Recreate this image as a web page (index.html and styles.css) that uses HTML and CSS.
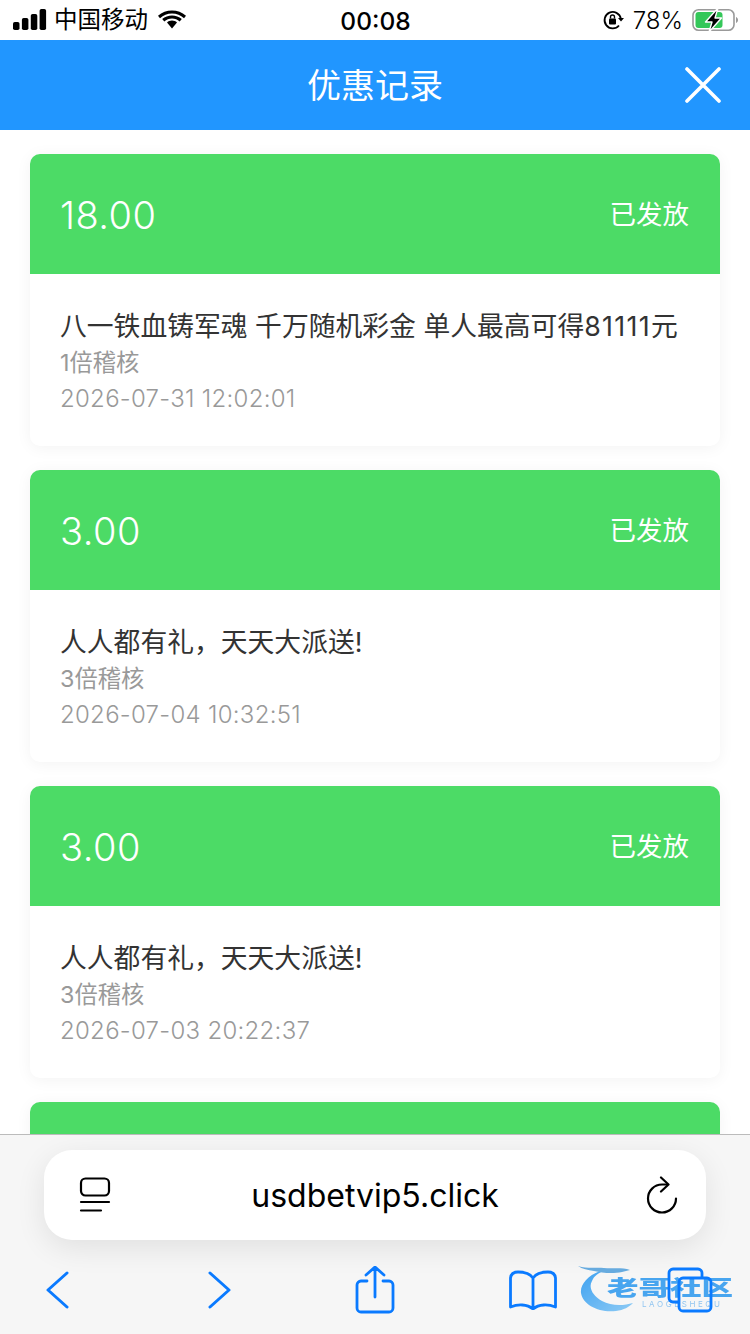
FILE: index.html
```html
<!DOCTYPE html>
<html lang="zh-CN">
<head>
<meta charset="utf-8">
<title>优惠记录</title>
<link rel="stylesheet" href="styles.css">
</head>
<body>
<div class="page">
  <div class="status">
    <div class="status-left">
      <svg class="signal" width="34" height="22" viewBox="0 0 34 22"><rect x="0" y="13" width="6.500" height="8" rx="1.800"/><rect x="8.900" y="9" width="6.500" height="12" rx="1.800"/><rect x="17.800" y="5" width="6.500" height="16" rx="1.800"/><rect x="26.600" y="0" width="6.500" height="21" rx="1.800"/></svg>
      <span class="carrier">中国移动</span>
      <svg width="30" height="22" viewBox="0 0 30 22"><path d="M15 4.500c-4.700 0-8.600 1.700-12 4.700l-2-2.400C5 3.300 9.700 1.500 15 1.500s10 1.800 14 5.300l-2 2.400c-3.400-3-7.300-4.700-12-4.700z"/><path d="M15 9.500c-3 0-5.500 1-7.700 3l-2.100-2.400C8 7.700 11.300 6.500 15 6.500s7 1.200 9.800 3.600l-2.100 2.400c-2.200-2-4.700-3-7.700-3z"/><path d="M15 11.500c2 0 3.600.7 5 1.900L15 19.500l-5-6.100c1.400-1.200 3-1.900 5-1.900z"/></svg>
    </div>
    <div class="clock">00:08</div>
    <div class="status-right">
      <svg class="orient" width="22" height="22" viewBox="0 0 22 22" fill="none"><path d="M18.800 9.500A8.200 8.200 0 1 0 17 16.500" stroke="#000" stroke-width="1.800"/><path d="M16 9h6l-3 3.500z" fill="#000"/><rect x="7" y="9.500" width="7" height="6" rx="1" fill="#000"/><path d="M8.500 9.500V8a2 2 0 0 1 4 0v1.500" stroke="#000" stroke-width="1.400"/></svg>
      <span class="pct">78%</span>
      <svg class="battery" width="48" height="24" viewBox="0 0 48 24" fill="none"><rect x="3" y="1.800" width="41" height="20.400" rx="5.500" stroke="#9a9a9a" stroke-width="1.600"/><path d="M46 9v6c1.300-.5 2-1.600 2-3s-.7-2.500-2-3z" fill="#9a9a9a"/><rect x="5.500" y="4" width="27" height="16" rx="3" fill="#34c759"/><path d="M28 0 15.500 14H22l-3 10 12.500-14H25l3-10z" fill="#000" stroke="#fff" stroke-width="1.400" stroke-linejoin="round"/></svg>
    </div>
  </div>

  <header class="nav">
    <h1 class="nav-title">优惠记录</h1>
    <svg class="nav-close" width="36" height="36" viewBox="0 0 36 36" fill="none"><path d="M2 2l32 32M34 2L2 34" stroke="#fff" stroke-width="3.600" stroke-linecap="round"/></svg>
  </header>

  <main class="list">
    <article class="card">
      <div class="card-head"><span class="amount">18.00</span><span class="state">已发放</span></div>
      <div class="card-body">
        <div class="name">八一铁血铸军魂 千万随机彩金 单人最高可得<span class="digits">81111</span>元</div>
        <div class="meta">1倍稽核</div>
        <div class="meta date">2026-07-31 12:02:01</div>
      </div>
    </article>
    <article class="card">
      <div class="card-head"><span class="amount">3.00</span><span class="state">已发放</span></div>
      <div class="card-body">
        <div class="name">人人都有礼，天天大派送!</div>
        <div class="meta">3倍稽核</div>
        <div class="meta date">2026-07-04 10:32:51</div>
      </div>
    </article>
    <article class="card">
      <div class="card-head"><span class="amount">3.00</span><span class="state">已发放</span></div>
      <div class="card-body">
        <div class="name">人人都有礼，天天大派送!</div>
        <div class="meta">3倍稽核</div>
        <div class="meta date">2026-07-03 20:22:37</div>
      </div>
    </article>
    <article class="card">
      <div class="card-head"></div>
    </article>
  </main>

  <footer class="browser">
    <div class="urlbar">
      <svg width="32" height="36" viewBox="0 0 32 36" fill="none" stroke="#000" stroke-width="2.200" stroke-linecap="round"><rect x="2" y="1.500" width="28" height="17" rx="4.500"/><path d="M2 25h28M2 33.500h20"/></svg>
      <span class="url">usdbetvip5.click</span>
      <svg class="reload" width="32" height="38" viewBox="0 0 32 38" fill="none" stroke="#000" stroke-width="2.200" stroke-linecap="round" stroke-linejoin="round"><path d="M30 22.500a14 14 0 1 1-14-14h5"/><path d="M15 1.500l7.500 7-7.500 7"/></svg>
    </div>
    <div class="mark">
      <svg class="mark-dragon" width="58" height="50" viewBox="0 0 58 50"><defs><linearGradient id="dg" x1="0" y1="0" x2="1" y2="1"><stop offset="0" stop-color="#1f93f0"/><stop offset="1" stop-color="#7cc4f5"/></linearGradient></defs><path d="M22 8C9 13 2 22 3 30c2 12 18 20 35 18 8-1 13-4 17-8-10 3-22 3-31-2-9-5-14-13-10-20 2-5 6-8 12-10z" fill="url(#dg)"/><path d="M0 3c10 3 18 1 26 2s18-1 26 2l-8 2c-9 2-20 1-28-1C10 7 4 6 0 3z" fill="#4f9fdc"/></svg>
      <div class="mark-text">
        <span class="mark-cn">老哥社区</span>
        <span class="mark-en">LAOGESHEQU</span>
      </div>
    </div>
    <div class="tools">
      <svg class="tool" width="24" height="38" viewBox="0 0 24 38" fill="none" stroke="#0a7aff" stroke-width="3" stroke-linecap="round" stroke-linejoin="round"><path d="M22 2 3 19l19 17"/></svg>
      <svg class="tool" width="24" height="38" viewBox="0 0 24 38" fill="none" stroke="#0a7aff" stroke-width="3" stroke-linecap="round" stroke-linejoin="round"><path d="M2 2l19 17L2 36"/></svg>
      <svg class="tool" width="40" height="48" viewBox="0 0 40 48" fill="none" stroke="#0a7aff" stroke-width="2.800" stroke-linecap="round" stroke-linejoin="round"><path d="M12 15H6a4 4 0 0 0-4 4v23a4 4 0 0 0 4 4h28a4 4 0 0 0 4-4V19a4 4 0 0 0-4-4h-6"/><path d="M20 31V2M11 9l9-8 9 8"/></svg>
      <svg class="tool" width="48" height="40" viewBox="0 0 48 40" fill="none" stroke="#0a7aff" stroke-width="2.800" stroke-linecap="round" stroke-linejoin="round"><path d="M24 8C21 3.500 15 2 9 2 5 2 2 4 1.500 8v29C9 34 18 34 24 39c6-5 15-5 22.500-2V8C46 4 43 2 39 2c-6 0-12 1.500-15 6zM24 8v31"/></svg>
      <svg class="tool" width="46" height="46" viewBox="0 0 46 46" fill="none" stroke="#0a7aff" stroke-width="2.800"><path d="M11 35H6a4 4 0 0 1-4-4V6a4 4 0 0 1 4-4h25a4 4 0 0 1 4 4v5"/><rect x="12" y="11" width="32" height="33" rx="4"/></svg>
    </div>
  </footer>
</div>
</body>
</html>
```

FILE: styles.css
```css
* { box-sizing: border-box; }
html, body { margin: 0; padding: 0; }
body { font-family: Inter, "Noto Sans CJK SC", sans-serif; background: #fff; }
.page { width: 750px; height: 1334px; display: flex; flex-direction: column; overflow: hidden; }

.status { height: 40px; flex: none; padding: 0 12px 0 13px; display: grid; grid-template-columns: 1fr auto 1fr; align-items: center; background: #fff; color: #000; }
.status-left { display: flex; align-items: center; gap: 7px; }
.status-right { display: flex; align-items: center; justify-content: flex-end; gap: 6px; }
.carrier { font-size: 23.500px; line-height: 40px; margin-right: 2px; }
.clock { font-size: 24.500px; font-weight: 500; padding-top: 1px; }
.orient { margin-right: 3px; }
.pct { font-size: 24px; font-weight: 300; }
.battery { margin-left: 1px; }

.nav { height: 90px; flex: none; background: #2196ff; display: flex; align-items: center; justify-content: center; position: relative; }
.nav-title { margin: 0 0 3px; font-size: 34px; font-weight: 400; color: #fff; }
.nav-close { position: absolute; right: 29px; top: 27px; }

.list { flex: 1; min-height: 0; overflow: hidden; background: #fff; padding: 24px 30px 0; display: flex; flex-direction: column; gap: 24px; }
.card { flex: none; border-radius: 10px; background: #fff; box-shadow: 0 2px 16px rgba(0,0,0,.05); overflow: hidden; }
.card-head { height: 120px; background: #4cdb66; display: flex; align-items: center; justify-content: space-between; padding: 0 31px 0 30px; color: #fff; }
.amount { font-size: 38px; font-weight: 300; padding-top: 1px; letter-spacing: .5px; }
.state { font-size: 26.500px; margin-bottom: 3px; }
.card-body { height: 172px; padding: 33px 30px 0; }
.name { font-size: 26.800px; line-height: 38px; color: #333; white-space: nowrap; }
.digits { letter-spacing: 1.300px; }
.meta { font-size: 23.300px; line-height: 36px; color: #999; }
.date { font-size: 24px; letter-spacing: .28px; font-weight: 300; }

.browser { height: 200px; flex: none; background: #f6f6f6; border-top: 1px solid #bbb; padding-top: 15px; position: relative; }
.urlbar { width: 662px; height: 90px; margin: 0 auto; background: #fff; border-radius: 28px; box-shadow: 0 8px 30px rgba(0,0,0,.09); display: grid; grid-template-columns: 1fr auto 1fr; align-items: center; padding: 0 28px 0 35px; }
.url { font-size: 32px; color: #000; margin-left: -7px; }
.reload { justify-self: end; }
.tools { position: relative; display: grid; grid-template-columns: 114px 212px 98px 218px 96px; justify-items: center; align-items: center; height: 72px; margin-top: 14px; }
.tool { display: block; }

.mark { position: absolute; left: 578px; top: 128px; width: 160px; height: 50px; filter: blur(.7px); opacity: .85; pointer-events: none; }
.mark-dragon { position: absolute; left: 0; top: 0; }
.mark-text { position: absolute; left: 29px; top: 15px; display: flex; flex-direction: column; }
.mark-cn { font-size: 21px; line-height: 20px; font-weight: 900; color: #2a97ee; transform: scaleX(1.5); transform-origin: left center; white-space: nowrap; }
.mark-en { font-size: 8px; line-height: 9px; margin: 2px 0 0 35px; color: #7fbdf0; letter-spacing: 2.600px; white-space: nowrap; }
```
